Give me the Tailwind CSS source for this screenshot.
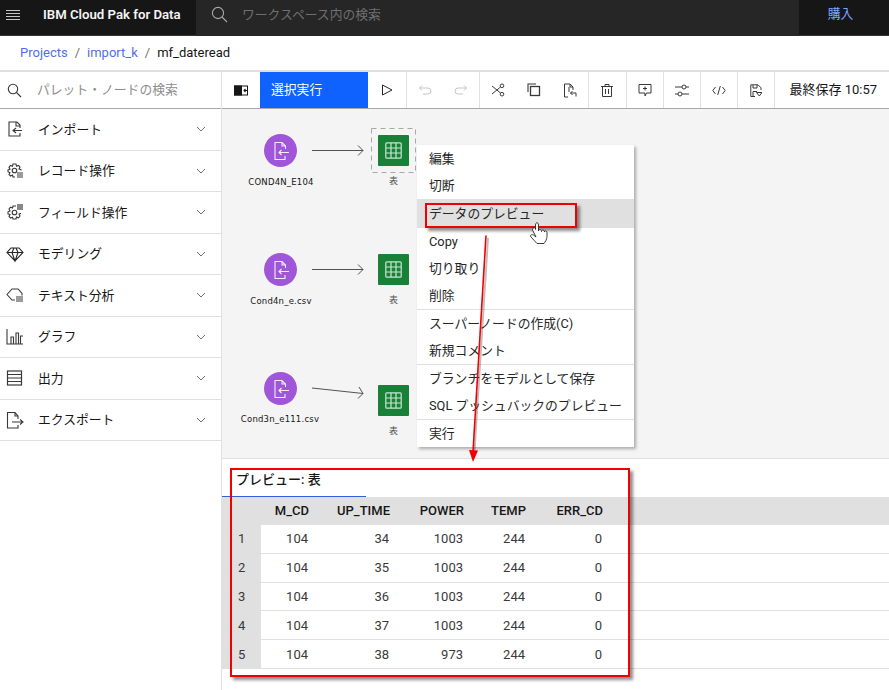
<!DOCTYPE html>
<html lang="ja"><head><meta charset="utf-8">
<script src="https://cdn.jsdelivr.net/npm/@tailwindcss/browser@4"></script>
</head>
<body class="bg-white">
<div class="relative flex h-[690px] w-[889px] flex-col overflow-hidden bg-white font-['Roboto','Noto_Sans_CJK_JP',sans-serif] text-[12.8px] text-[#161616]">
  <!-- top bar -->
  <header class="flex h-[36px] shrink-0 items-stretch bg-[#262626]">
    <div class="flex w-[196px] items-center bg-[#161616] border-b border-[#333] pb-[5px]">
      <svg class="ml-[5px] h-[16px] w-[16px]" viewBox="0 0 16 16" stroke="#c6c6c6" stroke-width="1.2"><path d="M1 3.500h14M1 6.500h14M1 9.500h14M1 12.500h14"/></svg>
      <span class="ml-[22px] font-semibold text-[13.2px] text-[#f4f4f4]">IBM Cloud Pak for Data</span>
    </div>
    <div class="flex flex-1 items-center pb-[7px]">
      <svg class="ml-[15px] h-[17px] w-[17px]" viewBox="0 0 17 17" fill="none" stroke="#a8a8a8" stroke-width="1.1"><circle cx="7" cy="7" r="5.6"/><path d="M11 11l5 5"/></svg>
      <span class="ml-[14px] text-[#6f6f6f]">ワークスペース内の検索</span>
    </div>
    <div class="flex w-[90px] items-center justify-center bg-[#161616] border-b border-[#333] pb-[7px] text-[#78a9ff]"><span class="mr-[7px]">購入</span></div>
  </header>
  <!-- breadcrumb -->
  <nav class="flex h-[36px] shrink-0 items-center gap-[7px] border-b-2 border-[#e0e0e0] pl-[20px] pb-[1px] text-[13px]">
    <span class="text-[#4f6fe8]">Projects</span><span class="text-[#6f6f6f]">/</span>
    <span class="text-[#4f6fe8]">import_k</span><span class="text-[#6f6f6f]">/</span>
    <span class="text-[#161616]">mf_dateread</span>
  </nav>
  <div class="flex min-h-0 flex-1">
    <!-- sidebar -->
    <aside class="flex w-[222px] shrink-0 flex-col border-r border-[#e0e0e0]">
      <div class="flex h-[37px] shrink-0 items-center border-b border-[#a8a8a8]">
        <svg class="ml-[7px] h-[15px] w-[15px]" viewBox="0 0 15 15" fill="none" stroke="#393939" stroke-width="1.1"><circle cx="6" cy="6" r="4.7"/><path d="M9.5 9.5l4.5 4.5"/></svg>
        <span class="ml-[15px] text-[#8d8d8d]">パレット・ノードの検索</span>
      </div>
      <div class="flex h-[41.5px] items-center border-b border-[#e0e0e0]">
        <svg class="ml-[6px] h-[18px] w-[18px]" viewBox="0 0 18 18" fill="none" stroke="#393939" stroke-width="1.1"><path d="M14 8V5l-3-3H3v14h11v-3M10 2v4h4"/><path d="M16 10.500H7M10 8l-3 2.500L10 13"/></svg>
        <span class="ml-[14px]">インポート</span>
        <svg class="ml-auto mr-[15px] h-[8px] w-[10px]" viewBox="0 0 10 8" fill="none" stroke="#6f6f6f"><path d="M1 2l4 4 4-4"/></svg>
      </div>
      <div class="flex h-[41.5px] items-center border-b border-[#e0e0e0]">
        <svg class="ml-[6px] h-[18px] w-[18px]" viewBox="0 0 18 18" fill="none" stroke="#393939" stroke-width="1.1"><path d="M9 15H7l-.5-2-2 1L3 12.500l1-1.800-2-1V8l2-.700-1-2L4.500 3.500l2 .8L7 2h3l.5 2.200 2-.8L14 5l-1 2 2 .6v1"/><circle cx="8.500" cy="8.500" r="2.300"/><path d="M11 11h6M11 13h6M11 15h6" stroke-width="1.200"/></svg>
        <span class="ml-[14px]">レコード操作</span>
        <svg class="ml-auto mr-[15px] h-[8px] w-[10px]" viewBox="0 0 10 8" fill="none" stroke="#6f6f6f"><path d="M1 2l4 4 4-4"/></svg>
      </div>
      <div class="flex h-[41.5px] items-center border-b border-[#e0e0e0]">
        <svg class="ml-[6px] h-[18px] w-[18px]" viewBox="0 0 18 18" fill="none" stroke="#393939" stroke-width="1.1"><path d="M10 3H7l-.5 2-2-.8L3 6l1 2-2 .8v2l2 .7-1 2 1.500 1.500 2-.8L7 16h3l.5-2 2 .8L14 13l-1-2 2-.6"/><circle cx="8.500" cy="9.500" r="2.300"/><path d="M12 1v6M14 1v6M16 1v6" stroke-width="1.200"/></svg>
        <span class="ml-[14px]">フィールド操作</span>
        <svg class="ml-auto mr-[15px] h-[8px] w-[10px]" viewBox="0 0 10 8" fill="none" stroke="#6f6f6f"><path d="M1 2l4 4 4-4"/></svg>
      </div>
      <div class="flex h-[41.5px] items-center border-b border-[#e0e0e0]">
        <svg class="ml-[6px] h-[18px] w-[18px]" viewBox="0 0 18 18" fill="none" stroke="#262626" stroke-width="1.1"><path d="M5 3h8l4 4.500L9 16 1 7.500zM1 7.500h16M6 7.500L9 16l3-8.500M6 7.500L8 3M12 7.500L10 3"/></svg>
        <span class="ml-[14px]">モデリング</span>
        <svg class="ml-auto mr-[15px] h-[8px] w-[10px]" viewBox="0 0 10 8" fill="none" stroke="#6f6f6f"><path d="M1 2l4 4 4-4"/></svg>
      </div>
      <div class="flex h-[41.5px] items-center border-b border-[#e0e0e0]">
        <svg class="ml-[6px] h-[18px] w-[18px]" viewBox="0 0 18 18" fill="none" stroke="#393939" stroke-width="1.1"><path d="M9 14H6L1 8.500 6 3h6l4 4.500v2"/><path d="M10 11h7M10 13h7M10 15h7" stroke-width="1.200"/></svg>
        <span class="ml-[14px]">テキスト分析</span>
        <svg class="ml-auto mr-[15px] h-[8px] w-[10px]" viewBox="0 0 10 8" fill="none" stroke="#6f6f6f"><path d="M1 2l4 4 4-4"/></svg>
      </div>
      <div class="flex h-[41.5px] items-center border-b border-[#e0e0e0]">
        <svg class="ml-[6px] h-[18px] w-[18px]" viewBox="0 0 18 18" fill="none" stroke="#393939" stroke-width="1.1"><path d="M1 1v15h16M5 16V9h2.500v7M10 16V5h2.500v11M14.500 16V8H17"/></svg>
        <span class="ml-[14px]">グラフ</span>
        <svg class="ml-auto mr-[15px] h-[8px] w-[10px]" viewBox="0 0 10 8" fill="none" stroke="#6f6f6f"><path d="M1 2l4 4 4-4"/></svg>
      </div>
      <div class="flex h-[41.5px] items-center border-b border-[#e0e0e0]">
        <svg class="ml-[6px] h-[18px] w-[18px]" viewBox="0 0 18 18" fill="none" stroke="#393939" stroke-width="1.200"><rect x="1.500" y="2" width="14" height="14"/><path d="M1.500 5.500h14M1.500 9h14M1.500 12.500h14"/></svg>
        <span class="ml-[14px]">出力</span>
        <svg class="ml-auto mr-[15px] h-[8px] w-[10px]" viewBox="0 0 10 8" fill="none" stroke="#6f6f6f"><path d="M1 2l4 4 4-4"/></svg>
      </div>
      <div class="flex h-[41.5px] items-center border-b border-[#e0e0e0]">
        <svg class="ml-[6px] h-[18px] w-[18px]" viewBox="0 0 18 18" fill="none" stroke="#393939" stroke-width="1.1"><path d="M12 8V5L9 1.500H1.500V17H12v-3M9 1.500V5h3"/><path d="M6 11h11M14 8.500l3 2.500-3 2.500"/></svg>
        <span class="ml-[14px]">エクスポート</span>
        <svg class="ml-auto mr-[15px] h-[8px] w-[10px]" viewBox="0 0 10 8" fill="none" stroke="#6f6f6f"><path d="M1 2l4 4 4-4"/></svg>
      </div>
    </aside>
    <!-- right column -->
    <main class="flex min-w-0 flex-1 flex-col">
      <div class="flex h-[37px] shrink-0 items-stretch border-b border-[#a8a8a8]">
        <div class="flex w-[38px] items-center justify-center">
          <svg class="h-[13px] w-[14px]" viewBox="0 0 14 13"><rect x=".5" y="2" width="13" height="9" fill="#fff" stroke="#161616"/><rect x="0" y="1.500" width="8" height="10" fill="#161616"/><path d="M13 6.500H10M11.500 5L10 6.500 11.500 8" fill="none" stroke="#161616" stroke-width="1.100"/></svg>
        </div>
        <div class="flex w-[108px] items-center bg-[#0f62fe] pl-[11px] text-white">選択実行</div>
        <div class="flex w-[39px] items-center justify-center border-r border-[#e0e0e0]">
          <svg class="h-[12px] w-[12px]" viewBox="0 0 12 12" fill="none" stroke="#262626"><path d="M1.500 1l9.500 5-9.500 5z"/></svg>
        </div>
        <div class="flex w-[72.500px] items-center justify-around border-r border-[#e0e0e0]">
          <svg class="h-[12px] w-[14px]" viewBox="0 0 14 12" fill="none" stroke="#c6c6c6"><path d="M4 1.500L1.500 4 4 6.500M1.500 4H10a3 3 0 010 6H5"/></svg>
          <svg class="h-[12px] w-[14px]" viewBox="0 0 14 12" fill="none" stroke="#c6c6c6"><path d="M10 1.500L12.500 4 10 6.500M12.500 4H4a3 3 0 000 6h5"/></svg>
        </div>
        <div class="flex w-[109px] items-center justify-around border-r border-[#e0e0e0]">
          <svg class="h-[14px] w-[14px]" viewBox="0 0 14 14" fill="none" stroke="#393939"><circle cx="11" cy="2.800" r="1.800"/><circle cx="11" cy="11.200" r="1.800"/><path d="M1 3l8.500 7M1 11l8.500-7"/></svg>
          <svg class="h-[14px] w-[14px]" viewBox="0 0 14 14" fill="none" stroke="#393939" stroke-width="1.100"><rect x="3.500" y="3.500" width="9" height="9" stroke-width="1.300"/><path d="M1 9V1h8"/></svg>
          <svg class="h-[15px] w-[14px]" viewBox="0 0 14 15" fill="none" stroke="#393939"><path d="M5 14H1.500V1H7l3 3v3M7 1v3h3"/><path d="M13 13.500V10H7.500M9.500 8L7.500 10l2 2M6 4v5"/></svg>
        </div>
        <div class="flex w-[38.500px] items-center justify-center border-r border-[#e0e0e0]">
          <svg class="h-[13px] w-[12px]" viewBox="0 0 12 13" fill="none" stroke="#393939"><path d="M0 2.500h12M4 2.500V.5h4v2M1.500 2.500V12.500h9V2.500M4.500 5v5M7.500 5v5"/></svg>
        </div>
        <div class="flex w-[36.500px] items-center justify-center border-r border-[#e0e0e0]">
          <svg class="h-[14px] w-[14px]" viewBox="0 0 14 14" fill="none" stroke="#393939"><path d="M1 1.500h12v8.500H8.500L7 13V10H1zM7 3.500v4M5 5.500h4"/></svg>
        </div>
        <div class="flex w-[37px] items-center justify-center border-r border-[#e0e0e0]">
          <svg class="h-[13px] w-[14px]" viewBox="0 0 14 13" fill="none" stroke="#393939"><path d="M0 3h7M11 3h3M0 10h3M7 10h7"/><circle cx="9" cy="3" r="2"/><circle cx="5" cy="10" r="2"/></svg>
        </div>
        <div class="flex w-[37px] items-center justify-center border-r border-[#e0e0e0]">
          <svg class="h-[11px] w-[14px]" viewBox="0 0 14 11" fill="none" stroke="#393939"><path d="M3.500 2L.8 5.500l2.700 3.500M10.500 2l2.700 3.500L10.500 9M8.300 1L5.700 10"/></svg>
        </div>
        <div class="flex w-[37px] items-center justify-center border-r border-[#e0e0e0]">
          <svg class="h-[13px] w-[12px]" viewBox="0 0 12 13" fill="none" stroke="#393939"><path d="M5 12.500H.8V.8H8l3 3V6M3 1v3h4V1M3 12V7.500h4"/><path d="M6.500 8.500H12l-2.700 3.500z"/></svg>
        </div>
        <div class="flex flex-1 items-center pl-[15px] text-[13px] whitespace-nowrap">最終保存 10:57</div>
      </div>
      <!-- canvas -->
      <div class="relative h-[349.500px] shrink-0 border-b border-[#e0e0e0] bg-[#f4f4f4]">
        <svg class="absolute left-0 top-0 h-[350px] w-[667px]" viewBox="0 0 667 350" fill="none">
          <g stroke="#525252" stroke-width="1"><path d="M90 41.500h51M136 36.500l5 5-5 5M90 160.500h51M136 155.500l5 5-5 5M90 279l51 5.500M137 278l4 6.500-5 5"/></g>
          <rect x="149.500" y="19.500" width="44" height="44" stroke="#a8a8a8" stroke-dasharray="5 4"/>
        </svg>
        <!-- node 1 -->
        <div class="absolute left-[42px] top-[25px] h-[33px] w-[33px] rounded-full bg-[#a056d8]">
          <svg class="h-[33px] w-[33px]" viewBox="0 0 33 33" fill="none" stroke="#fff" stroke-width="1.100" opacity=".9"><path d="M21 22v3.500H11V8.500h7l3.500 3.500v3M18 8.500V12h3.500M25 18.500H15M17.500 16L15 18.500l2.500 2.500"/></svg>
        </div>
        <div class="absolute left-[18px] top-[68px] w-[82px] text-center font-['DejaVu_Sans'] text-[8.5px] leading-[11px] tracking-[.2px] text-[#161616]">COND4N_E104</div>
        <div class="absolute left-[156px] top-[26px] flex h-[31px] w-[31px] items-center justify-center rounded-[1px] bg-[#198038]">
          <svg class="h-[17px] w-[17px]" viewBox="0 0 17 17" fill="none" stroke="#c8e6d0" stroke-width="1.200"><rect x=".8" y=".8" width="15.400" height="15.400" rx="1"/><path d="M6 1v15M11 1v15M1 6h15M1 11h15"/></svg>
        </div>
        <div class="absolute left-[156px] top-[66px] w-[31px] text-center text-[9px] leading-[12px] text-[#525252]">表</div>
        <!-- node 2 -->
        <div class="absolute left-[42px] top-[144px] h-[33px] w-[33px] rounded-full bg-[#a056d8]">
          <svg class="h-[33px] w-[33px]" viewBox="0 0 33 33" fill="none" stroke="#fff" stroke-width="1.100" opacity=".9"><path d="M21 22v3.500H11V8.500h7l3.500 3.500v3M18 8.500V12h3.500M25 18.500H15M17.500 16L15 18.500l2.500 2.500"/></svg>
        </div>
        <div class="absolute left-[18px] top-[187px] w-[82px] text-center font-['DejaVu_Sans'] text-[8.5px] leading-[11px] tracking-[.2px] text-[#161616]">Cond4n_e.csv</div>
        <div class="absolute left-[156px] top-[145px] flex h-[31px] w-[31px] items-center justify-center rounded-[1px] bg-[#198038]">
          <svg class="h-[17px] w-[17px]" viewBox="0 0 17 17" fill="none" stroke="#c8e6d0" stroke-width="1.200"><rect x=".8" y=".8" width="15.400" height="15.400" rx="1"/><path d="M6 1v15M11 1v15M1 6h15M1 11h15"/></svg>
        </div>
        <div class="absolute left-[156px] top-[185px] w-[31px] text-center text-[9px] leading-[12px] text-[#525252]">表</div>
        <!-- node 3 -->
        <div class="absolute left-[42px] top-[263px] h-[33px] w-[33px] rounded-full bg-[#a056d8]">
          <svg class="h-[33px] w-[33px]" viewBox="0 0 33 33" fill="none" stroke="#fff" stroke-width="1.100" opacity=".9"><path d="M21 22v3.500H11V8.500h7l3.500 3.500v3M18 8.500V12h3.500M25 18.500H15M17.500 16L15 18.500l2.500 2.500"/></svg>
        </div>
        <div class="absolute left-[8px] top-[305px] w-[100px] text-center font-['DejaVu_Sans'] text-[8.5px] leading-[11px] tracking-[.2px] text-[#161616]">Cond3n_e111.csv</div>
        <div class="absolute left-[156px] top-[276px] flex h-[31px] w-[31px] items-center justify-center rounded-[1px] bg-[#198038]">
          <svg class="h-[17px] w-[17px]" viewBox="0 0 17 17" fill="none" stroke="#c8e6d0" stroke-width="1.200"><rect x=".8" y=".8" width="15.400" height="15.400" rx="1"/><path d="M6 1v15M11 1v15M1 6h15M1 11h15"/></svg>
        </div>
        <div class="absolute left-[156px] top-[316px] w-[31px] text-center text-[9px] leading-[12px] text-[#525252]">表</div>
      </div>
      <!-- preview panel -->
      <section class="flex min-h-0 flex-1 flex-col">
        <div class="h-[38px] shrink-0">
          <div class="flex h-full w-[144px] items-center border-b border-[#2f5fdc] pl-[14px] pt-[6px] font-medium text-[13px] text-[#161616]">プレビュー: 表</div>
        </div>
        <table class="w-full border-collapse text-[13px]">
          <thead><tr class="h-[28px] bg-[#e0e0e0] text-[#161616]">
            <th class="w-[39px] p-0"></th>
            <th class="w-[48px] p-0 text-right font-medium">M_CD</th>
            <th class="w-[81px] p-0 text-right font-medium">UP_TIME</th>
            <th class="w-[74px] p-0 text-right font-medium">POWER</th>
            <th class="w-[62px] p-0 text-right font-medium">TEMP</th>
            <th class="w-[77px] p-0 text-right font-medium">ERR_CD</th>
            <th class="p-0"></th>
          </tr></thead>
          <tbody class="text-[#393939]">
            <tr class="h-[28.800px] border-b border-[#e0e0e0]"><td class="bg-[#e0e0e0] pl-[16px] pt-[1px]">1</td><td class="pr-[1px] pt-[1px] text-right">104</td><td class="pr-[1px] pt-[1px] text-right">34</td><td class="pr-[1px] pt-[1px] text-right">1003</td><td class="pr-[1px] pt-[1px] text-right">244</td><td class="pr-[1px] pt-[1px] text-right">0</td><td></td></tr>
            <tr class="h-[28.800px] border-b border-[#e0e0e0]"><td class="bg-[#e0e0e0] pl-[16px] pt-[1px]">2</td><td class="pr-[1px] pt-[1px] text-right">104</td><td class="pr-[1px] pt-[1px] text-right">35</td><td class="pr-[1px] pt-[1px] text-right">1003</td><td class="pr-[1px] pt-[1px] text-right">244</td><td class="pr-[1px] pt-[1px] text-right">0</td><td></td></tr>
            <tr class="h-[28.800px] border-b border-[#e0e0e0]"><td class="bg-[#e0e0e0] pl-[16px] pt-[1px]">3</td><td class="pr-[1px] pt-[1px] text-right">104</td><td class="pr-[1px] pt-[1px] text-right">36</td><td class="pr-[1px] pt-[1px] text-right">1003</td><td class="pr-[1px] pt-[1px] text-right">244</td><td class="pr-[1px] pt-[1px] text-right">0</td><td></td></tr>
            <tr class="h-[28.800px] border-b border-[#e0e0e0]"><td class="bg-[#e0e0e0] pl-[16px] pt-[1px]">4</td><td class="pr-[1px] pt-[1px] text-right">104</td><td class="pr-[1px] pt-[1px] text-right">37</td><td class="pr-[1px] pt-[1px] text-right">1003</td><td class="pr-[1px] pt-[1px] text-right">244</td><td class="pr-[1px] pt-[1px] text-right">0</td><td></td></tr>
            <tr class="h-[28.800px] border-b border-[#e0e0e0]"><td class="bg-[#e0e0e0] pl-[16px] pt-[1px]">5</td><td class="pr-[1px] pt-[1px] text-right">104</td><td class="pr-[1px] pt-[1px] text-right">38</td><td class="pr-[1px] pt-[1px] text-right">973</td><td class="pr-[1px] pt-[1px] text-right">244</td><td class="pr-[1px] pt-[1px] text-right">0</td><td></td></tr>
          </tbody>
        </table>
      </section>
    </main>
  </div>
  <!-- context menu -->
  <div class="absolute left-[417px] top-[145px] flex w-[217px] flex-col bg-white text-[#262626] shadow-[2px_2px_3px_rgba(0,0,0,0.3)]">
    <div class="flex h-[27px] items-center pl-[12px]">編集</div>
    <div class="flex h-[27px] items-center pl-[12px]">切断</div>
    <div class="flex h-[29px] items-center bg-[#e0e0e0] pl-[12px]">データのプレビュー</div>
    <div class="flex h-[27px] items-center pl-[12px]">Copy</div>
    <div class="flex h-[27px] items-center pl-[12px]">切り取り</div>
    <div class="flex h-[28px] items-center border-b border-[#e0e0e0] pl-[12px]">削除</div>
    <div class="flex h-[27px] items-center pl-[12px]">スーパーノードの作成(C)</div>
    <div class="flex h-[28px] items-center border-b border-[#e0e0e0] pl-[12px]">新規コメント</div>
    <div class="flex h-[27px] items-center pl-[12px]">ブランチをモデルとして保存</div>
    <div class="flex h-[28px] items-center border-b border-[#e0e0e0] pl-[12px]">SQL プッシュバックのプレビュー</div>
    <div class="flex h-[27px] items-center pl-[12px]">実行</div>
  </div>
  <!-- red annotations -->
  <div class="absolute left-[425px] top-[203px] h-[25px] w-[152px] border-[2px] border-[#f00000] shadow-[3px_3px_3px_rgba(0,0,0,0.45)]"></div>
  <div class="absolute left-[230px] top-[468px] h-[209px] w-[400px] border-[2px] border-[#f00000] shadow-[3px_3px_3px_rgba(0,0,0,0.45)]"></div>
  <svg class="absolute left-0 top-0 h-[690px] w-[889px]" viewBox="0 0 889 690" fill="none">
    <path d="M488 238L474.500 452" stroke="#000" stroke-opacity=".25" stroke-width="2"/>
    <path d="M486 235.500L473 452" stroke="#f00000" stroke-width="1.600"/>
    <path d="M469 450L478 450.500 473 462z" fill="#f00000"/>
    <path d="M533 238c0-3 3-3 3-.5v-4.500c0-3 3-3 3 0v6c0-2 3-2 3 .5 0-2 3-2 3 .5 0-1.500 2.500-1.500 2.500 .5v4c0 3-2 5.500-3 7h-7c-2-2-4-4.500-6-6.500-1.500-2 1-3 2.500-2l2.500 2z" fill="#fff" stroke="#262626" stroke-width=".9" transform="translate(-.5 -8)"/>
  </svg>
</div>
</body></html>
